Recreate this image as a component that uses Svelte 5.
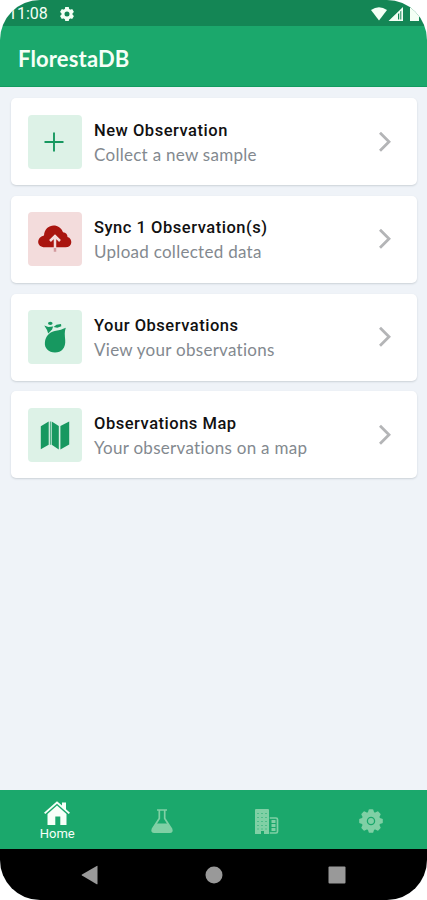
<script>
	const items = [
		{ icon: 'plus', title: 'New Observation', text: 'Collect a new sample' },
		{ icon: 'cloud', title: 'Sync 1 Observation(s)', text: 'Upload collected data' },
		{ icon: 'seed', title: 'Your Observations', text: 'View your observations' },
		{ icon: 'map', title: 'Observations Map', text: 'Your observations on a map' }
	];
	const tabs = ['home', 'flask', 'building', 'settings'];

	let active = 'home';
</script>

<div class="screen">
	<div class="status">
		<span class="time">11:08</span>
		<svg class="status_gear" width="16" height="16" viewBox="0 0 24 24">
			<circle class="status_ring" cx="12" cy="12" r="6" />
			{#each [0, 60, 120, 180, 240, 300] as angle}
				<path d="M9.300 1.500h5.400l.8 5h-7z" transform="rotate({angle} 12 12)" />
			{/each}
		</svg>
		<svg class="status_signal" width="48" height="16" viewBox="0 0 48 16">
			<path d="M0 4Q8-1.500 16 4L8 14.500z" />
			<path fill-rule="evenodd" d="M17.500 15L32 1v14zM27 8v5.500h1.200V7zM29.300 5.500v8h1V4.500z" />
			<path d="M39 2h2V.5h5V2h2v13h-9z" />
		</svg>
	</div>

	<header>FlorestaDB</header>

	<main>
		{#each items as item}
			<button class="card">
				<span class="badge" class:badge_red={item.icon === 'cloud'}>
					<svg width="54" height="54" viewBox="0 0 54 54">
						{#if item.icon === 'plus'}
							<path class="plus" d="M26 17.500v19M16.500 27h19" />
						{:else if item.icon === 'cloud'}
							<path d="M17 35.300C8 35.300 8.300 25 16 23.500C16.500 11.500 31.500 10 35 20.300C38 20.600 39.500 22.500 39.500 25C45 26.500 44.800 35.300 37.500 35.300z" />
							<path class="stem" d="M27 35v4.800" />
							<path class="arrow" d="M27 36V24M22 29l5-5 5 5" />
						{:else if item.icon === 'seed'}
							<path d="M37.800 17.800C36.300 22 36.800 25 37.200 30C37.900 38 33.500 42.500 27 42.500C20.500 42.500 16.300 38 16.900 32.500C17.500 26 22 21.600 28 20.800C32 20.300 34 19.300 37.800 17.800z" />
							<path d="M16.300 15.500l4 1.500 4.800-.5-1 3-3.900 4-1.200-3.600z" />
							<ellipse cx="22.300" cy="13.300" rx="2.300" ry="1.600" />
							<path d="M25.500 17l3-2.300 4.500-.8.300 2.300-4 1.500z" />
						{:else}
							<path d="M12.800 18.300l7.900-4.800v23.300l-7.900 4.400zM21.900 13.500h.8v23.300h-.8zM23.700 13.500l7.100 4.600v23.300l-7.100-4.600zM32.400 18.100l8.800-4.600v23l-8.800 4.900z" />
						{/if}
					</svg>
				</span>
				<span class="label">
					<strong>{item.title}</strong>
					<small>{item.text}</small>
				</span>
				<svg class="chevron" width="14" height="22" viewBox="0 0 14 22">
					<path d="M2 1.800l9 9-9 9" />
				</svg>
			</button>
		{/each}
	</main>

	<nav>
		{#each tabs as tab}
			<button class="tab" class:tab_active={active === tab} aria-label={tab} on:click={() => (active = tab)}>
				{#if tab === 'home'}
					<svg width="28" height="26" viewBox="0 0 28 26">
						<path d="M4.500 14L14 5.500l9.500 8.500v11h-6.200v-8.500h-5V25H4.500z" />
						<path d="M1 12.800L14 1.200l5 4.400V2.500h4v6.700l4 3.600-1.300 1.300L14 3.800 2.300 14z" />
					</svg>
					<span>Home</span>
				{:else if tab === 'flask'}
					<svg width="26" height="26" viewBox="0 0 26 26">
						<path class="line" d="M8 2h10M10.300 2.500v8L3.500 21q-1.200 3.200 1.800 3.200h15.400q3 0 1.800-3.200l-6.800-10.500v-8" />
						<path d="M7.500 15.500h11l4 5.500q1.200 3.200-1.800 3.200H5.300q-3 0-1.800-3.200z" />
					</svg>
				{:else if tab === 'building'}
					<svg width="26" height="26" viewBox="0 0 26 26">
						<path d="M2 2q0-1 1-1h12q1 0 1 1v24h-5v-3H8v3H2z" />
						<path class="windows" d="M4.500 5.500H15M4.500 9.500H15M4.500 13.500H15M4.500 17.500H15M4.500 21H15" />
						<path class="line" d="M16.700 10H23q1.500 0 1.500 1.500v12q0 1.500-1.500 1.500h-6.300" />
						<path class="thick" d="M20.500 12v11" />
					</svg>
				{:else}
					<svg width="26" height="26" viewBox="-1 -1 26 26">
						<circle cx="12" cy="12" r="9.300" />
						{#each [0, 45, 90, 135, 180, 225, 270, 315] as angle}
							<path d="M9.700.8q.2-.6.800-.6h3q.6 0 .8.600l1 3.200H8.700z" transform="rotate({angle} 12 12)" />
						{/each}
						<circle class="hub" cx="12" cy="12" r="3.600" />
					</svg>
				{/if}
			</button>
		{/each}
	</nav>

	<div class="system">
		<svg width="18" height="20" viewBox="0 0 18 20"><path d="M16.500 1v18q0 .5-.8.200L1 10.600q-1-.6 0-1.200L15.700 1q.8-.4.800 0z" /></svg>
		<svg width="18" height="18" viewBox="0 0 18 18"><circle cx="9" cy="9" r="8.500" /></svg>
		<svg width="18" height="18" viewBox="0 0 18 18"><rect x=".5" y=".5" width="17" height="17" rx="1" /></svg>
	</div>
</div>

<style>
	:global(body) {
		background: #fff;
	}
	.screen {
		display: flex;
		flex-direction: column;
		box-sizing: border-box;
		width: 427px;
		height: 900px;
		overflow: hidden;
		border-radius: 40px;
		background: #eff3f8;
		font-family: Roboto, sans-serif;
	}
	svg {
		display: block;
		flex: none;
		fill: currentColor;
	}
	button {
		border: 0;
		font: inherit;
		text-align: left;
	}
	.status {
		display: flex;
		align-items: center;
		flex: none;
		height: 26px;
		padding: 2px 8px 0;
		box-sizing: border-box;
		background: #148655;
		color: #f4fff5;
	}
	.time {
		width: 51px;
		font-size: 16px;
		line-height: 24px;
	}
	.status_ring {
		fill: none;
		stroke: currentColor;
		stroke-width: 4.500;
	}
	.status_signal {
		margin-left: auto;
	}
	header {
		flex: none;
		height: 61px;
		box-sizing: border-box;
		padding-left: 18px;
		border-bottom: 1px solid #129c60;
		background: #1ba86c;
		color: #f5fff7;
		font-family: Lato, sans-serif;
		font-size: 22px;
		font-weight: 700;
		letter-spacing: .15px;
		line-height: 65px;
	}
	main {
		display: flex;
		flex: 1;
		flex-direction: column;
		gap: 10.800px;
		padding: 11px 10px 0 11px;
	}
	.card {
		display: flex;
		align-items: center;
		height: 87px;
		box-sizing: border-box;
		padding: 0 25px 0 17px;
		border-radius: 5px;
		background: #fff;
		box-shadow: 0 1px 2px #cbd1d7;
	}
	.badge {
		border-radius: 4px;
		background: #ddf2e7;
		color: #179860;
	}
	.badge_red {
		background: #f3dcdc;
		color: #a9150f;
	}
	.plus {
		fill: none;
		stroke: currentColor;
		stroke-width: 1.900;
	}
	.arrow {
		fill: none;
		stroke: #f3dcdc;
		stroke-width: 2.500;
	}
	.stem {
		stroke: #d29a9e;
		stroke-width: 2.500;
	}
	.label {
		display: flex;
		flex: 1;
		flex-direction: column;
		margin-left: 12px;
		padding-top: 2px;
		white-space: nowrap;
	}
	strong {
		color: #111;
		font-size: 16.500px;
		font-weight: 500;
		letter-spacing: .52px;
		line-height: 24px;
	}
	small {
		color: #83898f;
		font-family: Lato, sans-serif;
		font-size: 17px;
		letter-spacing: .28px;
		line-height: 24px;
	}
	.chevron {
		fill: none;
		stroke: #b4b5b7;
		stroke-width: 2.800;
	}
	nav {
		display: flex;
		flex: none;
		height: 59px;
		padding: 0 4px 0 5px;
		box-sizing: border-box;
		background: #1ba86c;
	}
	.tab {
		display: flex;
		flex: 1;
		flex-direction: column;
		align-items: center;
		justify-content: center;
		padding: 2px 0 0;
		background: none;
		color: #80d0a5;
	}
	.tab_active {
		padding: 3px 0 0;
		color: #f7fff8;
	}
	.tab span {
		font-size: 13px;
		line-height: 16px;
	}
	.line {
		fill: none;
		stroke: currentColor;
		stroke-width: 1.700;
	}
	.thick {
		stroke: currentColor;
		stroke-width: 4;
		stroke-dasharray: 3 1;
	}
	.windows {
		stroke: #1ba86c;
		stroke-width: 1;
		stroke-dasharray: 1 3;
	}
	.hub {
		fill: none;
		stroke: #1ba86c;
		stroke-width: 1.300;
	}
	.system {
		display: flex;
		flex: none;
		align-items: center;
		justify-content: space-between;
		height: 51px;
		padding: 0 81px;
		box-sizing: border-box;
		background: #000;
		color: #999;
	}
</style>
